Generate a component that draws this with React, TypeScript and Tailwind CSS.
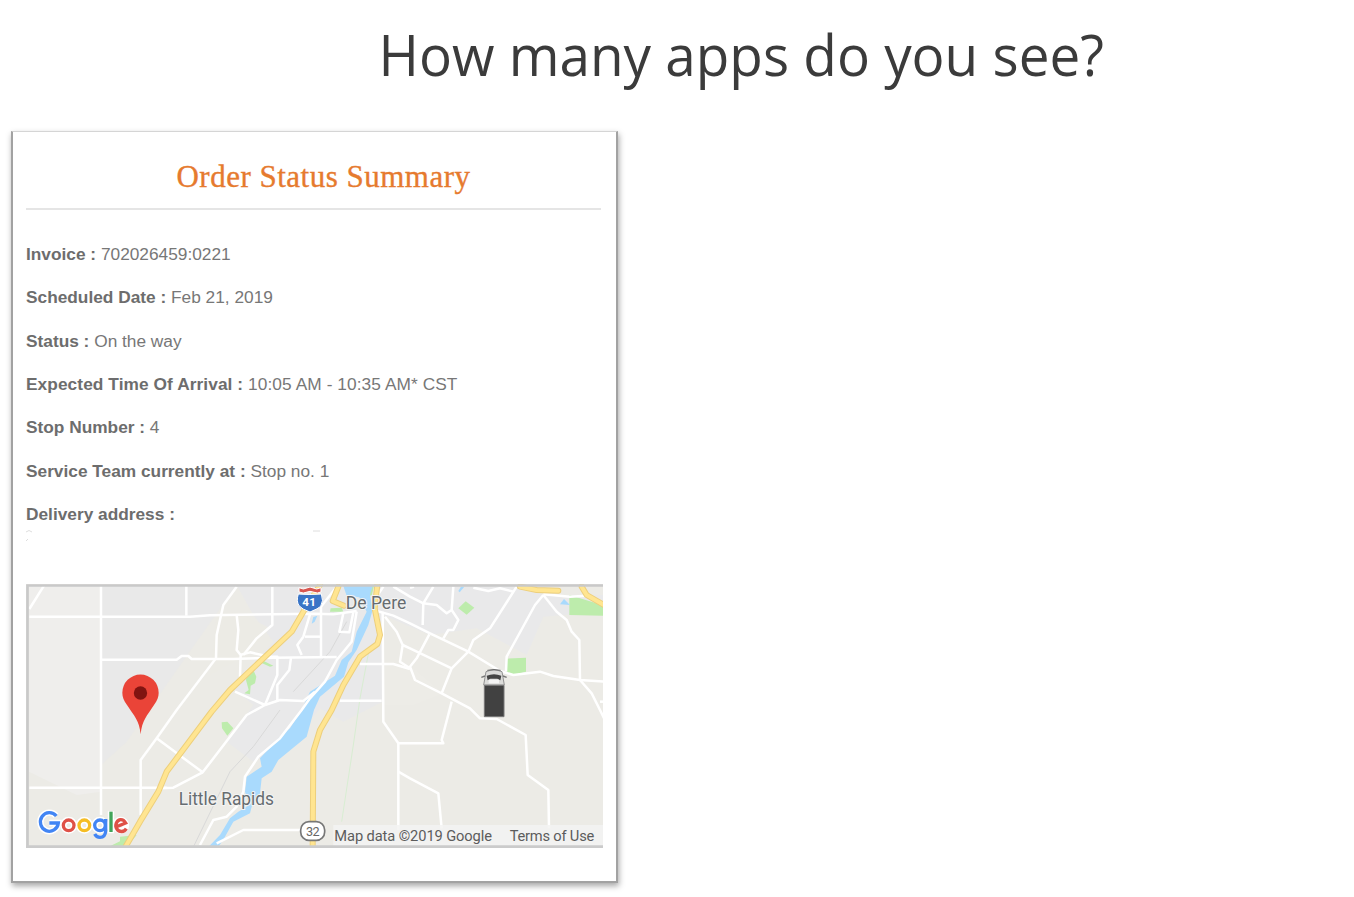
const rows = [
  { label: "Invoice :", value: "702026459:0221", tracking: "" },
  { label: "Scheduled Date :", value: "Feb 21, 2019", tracking: "" },
  { label: "Status :", value: "On the way", tracking: "" },
  { label: "Expected Time Of Arrival :", value: "10:05 AM - 10:35 AM* CST", tracking: "tracking-[0.08px]" },
  { label: "Stop Number :", value: "4", tracking: "" },
  { label: "Service Team currently at :", value: "Stop no. 1", tracking: "" },
  { label: "Delivery address :", value: "", tracking: "" },
];

// Map geometry uses three drawing units per pixel.
const roads = [
  "M28 102L72 32", "M243 32V720", "M28 125H510L570 121L880 116L940 118L1010 108", "M499 32V122",
  "M245 254H470L485 243H505L515 252H640L760 248L950 246",
  "M650 35L610 90L590 180L588 250L470 405L410 490L362 555V720",
  "M410 490L548 592L680 420L735 390L645 350", "M548 592L460 638L420 640", "M28 638H440",
  "M735 390L780 375L850 378L885 350", "M757 35V150L710 190L670 240",
  "M650 120L655 165L650 225L662 240L660 305", "M660 240L690 232L750 245H772V300L735 390",
  "M813 248L808 285L772 330V375", "M870 118L850 185L832 210L845 240", "M903 245V95L950 35", "M855 185H903",
  "M1010 110L995 200L950 255L915 320L870 370L845 405L780 490L715 545L675 605L670 650L650 695L620 725L580 735L540 810",
  "M970 115L958 170L988 172L1000 112", "M1088 110L1090 440L1135 505V765", "M1135 505H1270L1265 495L1295 380",
  "M1020 267H1120L1170 282", "M960 377H1085",
  "M1060 105L1120 122L1170 145L1230 175L1345 230L1440 288L1480 300L1560 290L1600 303L1680 315L1752 320",
  "M1680 315L1715 355L1740 405L1752 430", "M1740 380H1752",
  "M1570 60L1610 110L1640 135L1655 170L1678 195L1680 315", "M1570 60L1545 90L1460 245L1458 290",
  "M1490 35L1410 160L1360 195L1345 230L1295 280L1265 355", "M1360 38L1405 48L1440 40L1480 50",
  "M1120 35L1170 65L1210 85L1250 90L1280 115L1295 105L1300 35", "M1240 35L1210 85L1208 150",
  "M1295 105L1315 135L1300 165H1285L1270 190",
  "M1228 178L1190 250L1170 275L1185 315L1265 355L1350 400L1380 430L1430 432L1517 480L1523 600L1585 645L1587 760",
  "M1148 210L1170 220L1295 280", "M1135 590L1170 610L1255 655L1265 760",
  "M1095 125L1130 170L1148 210L1140 260L1170 280", "M1570 58L1650 65L1700 62",
  "M845 765H670L590 805", "M1170 38L1182 35", "M1070 65L1090 35",
];

const highways = [
  "M900 30L850 110L815 170L730 250L630 345L575 410L440 590L415 650L360 740L316 816",
  "M1072 30L1064 100L1080 180L1072 207L1020 245L970 330L935 405L900 465L880 530L878 816",
  "M955 35L938 78L972 92", "M1500 35L1550 45L1615 47", "M1685 35L1700 60L1752 90",
];

function DeliveryMap() {
  return (
    <svg className="block h-[264px] w-[577px] shrink-0" viewBox="18 27 1731 792">
      <rect x="18" y="27" width="1731" height="792" fill="#ecebe6" />
      <path d="M27 30H243V650L170 660L27 590Z" fill="#efeeec" />
      <path d="M243 30H650L530 200L460 300L390 400L320 500L243 570Z" fill="#e9e9e9" />
      <path d="M650 30H1490L1570 60H1749V110L1570 125L1520 240L1370 160L1230 180L1088 120V380L970 440L900 400L820 500L700 560L620 500L700 390L640 340L760 200L700 120Z" fill="#e9e9ea" />
      <path d="M590 120L650 110L750 160L680 240L570 300Z" fill="#ecebe5" />
      <path d="M1088 270H1170L1270 355L1180 390H1088Z" fill="#edece7" />
      <g fill="#bdecac">
        <path d="M682 292L700 285L709 305L705 325L692 332L690 358L673 355L686 345L678 315Z" />
        <path d="M725 255L760 272L750 275L720 262Z" />
        <path d="M605 442L622 440L640 460L622 482L606 460Z" />
        <path d="M1315 100L1337 79L1363 98L1340 119Z" />
        <path d="M1458 251L1518 248V290L1480 300L1458 293Z" />
        <path d="M1648 60L1749 91V122L1648 120Z" />
        <path d="M932 100L965 98L970 110H930Z" />
        <path d="M1040 35L1062 32L1055 63L1038 57Z" />
        <path d="M300 785L350 780L320 816H265L300 799Z" />
      </g>
      <path d="M1048 220L1020 370L1000 510L965 740" fill="none" stroke="#d8edd2" strokeWidth="3" />
      <path d="M980 140L930 230L820 350M780 405L700 515L630 590L520 816" fill="none" stroke="#d9d9d9" strokeWidth="3" />
      <g fill="#a9dafd">
        <path d="M970 33H1058L1050 60L1058 105L1045 150L1010 225L985 262L972 305L900 365L882 405L860 485L775 555L755 590L725 610L720 655L695 695L690 715L640 740L615 785L595 816H565L600 780L630 730L655 710L688 690L675 650L680 605L725 575L720 550L785 480L810 460L845 405L870 350L945 302L965 255L995 230L1010 170L1040 110L1018 67L980 62Z" />
        <path d="M880 126L892 122L884 140L875 146Z" />
        <path d="M1620 88L1632 72L1650 90Z" />
        <path d="M1323 35H1333L1319 52L1315 48Z" />
      </g>
      <g fill="none" stroke="#fff" strokeWidth="7.5" strokeLinejoin="round">
        {roads.map((d) => <path key={d} d={d} />)}
      </g>
      <g fill="none" strokeLinejoin="round" strokeLinecap="round">
        {highways.map((d) => <path key={d} d={d} stroke="#edcf7c" strokeWidth="18" />)}
        {highways.map((d) => <path key={d} d={d} stroke="#ffe591" strokeWidth="12" />)}
      </g>

      <rect x="940" y="750" width="809" height="66" fill="#f3f3f2" fillOpacity=".85" />
      <path d="M837 38L850 42L870 36L890 42L903 38V51L892 54L870 49L850 54L837 51Z" fill="#d85650" stroke="#fff" strokeWidth="3" />
      <path d="M835 57Q870 60 904 57Q912 78 902 94Q895 101 870 111Q846 103 837 92Q828 78 835 57Z" fill="#3974c6" stroke="#fff" strokeWidth="3" />
      <text x="847" y="94" textLength="41" fontSize="35" className="fill-white font-[Roboto,sans-serif] font-bold">41</text>
      <rect x="842" y="740" width="72" height="56" rx="25" fill="#fff" stroke="#777" strokeWidth="5" />
      <text x="858" y="783" textLength="41" fontSize="38" className="fill-[#666] font-[Roboto,sans-serif]">32</text>

      <g className="fill-[#666c70] font-[Roboto,sans-serif]" stroke="#f4f4f3" strokeWidth="6" paintOrder="stroke" fontSize="53">
        <text x="977" y="103" textLength="182" lengthAdjust="spacingAndGlyphs">De Pere</text>
        <text x="476" y="690" textLength="286" lengthAdjust="spacingAndGlyphs">Little Rapids</text>
      </g>
      <g className="fill-[#5c5c5c] font-[Roboto,sans-serif]" fontSize="44">
        <text x="943" y="797" textLength="473">Map data ©2019 Google</text>
        <text x="1469" y="797" textLength="254">Terms of Use</text>
      </g>

      <path d="M362 478C358 435 342 423 321 390C311 375 307 366 307 353A54.500 54.500 0 0 1 416 353C416 366 412 375 402 390C381 423 366 435 362 478Z" fill="#ea4438" />
      <circle cx="361.500" cy="354" r="20" fill="#811411" />

      <g transform="translate(1170 0)">
        <path d="M228 290Q252 280 276 290L283 330H221Z" fill="#dcdcda" stroke="#929292" strokeWidth="3" />
        <path d="M232 286Q252 281 272 286" fill="none" stroke="#6b6b6b" strokeWidth="3" />
        <path d="M230 302Q252 293 274 302L271 316L262 311H241L233 316Z" fill="#454545" />
        <path d="M236 314H267V325H236Z" fill="#f4f4f4" />
        <path d="M214 307L225 303M290 307L279 303" stroke="#777" strokeWidth="4" />
        <path d="M223 331H282V425H223Z" fill="#414141" stroke="#777" strokeWidth="3" />
      </g>

      <g fill="none" strokeWidth="19" stroke="#fff">
        <path d="M108 722A27 28 0 1 0 115 744H88M273 709V775" />
        <circle cx="146" cy="751" r="16" /><circle cx="193" cy="751" r="16" /><circle cx="240" cy="751" r="16" />
        <circle cx="302" cy="751" r="16" />
      </g>
      <g fill="none" strokeWidth="10">
        <path d="M109 723A27 28 0 1 0 115 744H88" stroke="#4285f4" />
        <circle cx="146" cy="751" r="16" stroke="#df5147" />
        <circle cx="193" cy="751" r="16" stroke="#f5bd24" />
        <circle cx="240" cy="751" r="16" stroke="#4285f4" />
        <path d="M257 732V768Q256 787 240 787Q229 787 224 777" stroke="#4285f4" />
        <path d="M273 710V771" stroke="#42a45a" strokeWidth="10" />
        <path d="M286 757L317 744Q311 733 301 734A17 18 0 1 0 319 761" stroke="#df5147" />
      </g>
      <path d="M22.500 819V31.500H1749" fill="none" stroke="#c9c9c9" strokeWidth="8" />
      <path d="M18 815H1749" stroke="#cbcbcb" strokeWidth="8" />
    </svg>
  );
}

export default function App() {
  return (
    <main className="h-[897px] w-full overflow-hidden bg-white">
      <header className="flex h-[131px] justify-center pl-[129px] pt-[14px]">
        <h1 className="origin-center scale-x-[0.954] whitespace-nowrap font-['Open_Sans',sans-serif] text-[57.500px] leading-[80px] text-[#3b3b3b]">
          How many apps do you see?
        </h1>
      </header>
      <section className="ml-[11px] flex h-[752px] w-[607px] flex-col border-2 border-t border-[#a2a2a2] border-t-[#d5d5d5] bg-white pl-[13px] shadow-[1px_3px_6px_rgba(0,0,0,0.35)]">
        <div className="flex h-[78px] w-[575px] shrink-0 justify-center border-b-2 border-[#e5e5e5] pl-[20px] pt-[25px]">
          <h2 className="whitespace-nowrap font-['Liberation_Serif',serif] text-[31px] leading-[40px] tracking-[0.5px] text-[#e67a2e] [-webkit-text-stroke:0.35px_#e67a2e]">
            Order Status Summary
          </h2>
        </div>
        <div className="flex shrink-0 flex-col pt-[23px] font-['Liberation_Sans',sans-serif] text-[17.300px] text-[#777]">
          {rows.map(({ label, value, tracking }) => (
            <p key={label} className={`h-[43.350px] whitespace-nowrap leading-[43.350px] ${tracking}`}>
              <strong className="font-bold text-[#6d6d6d]">{label}</strong> {value}
            </p>
          ))}
        </div>
        <svg className="-mt-[6px] mb-[37.500px] block h-[16px] w-[300px] shrink-0" viewBox="0 0 300 16">
          <path d="M0 2Q3 -1 6 2M0 11L2 9M287 1H294" fill="none" stroke="#dedede" />
        </svg>
        <DeliveryMap />
      </section>
    </main>
  );
}
